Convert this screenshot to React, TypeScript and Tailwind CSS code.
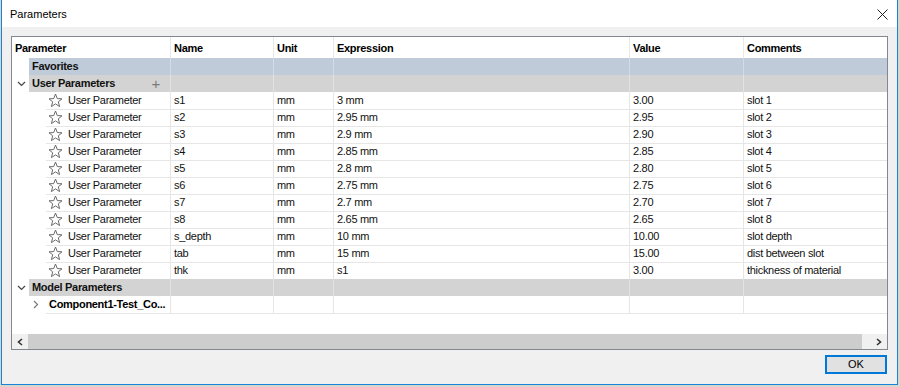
import React from "react";

const rows = [
  ["s1", "3 mm", "3.00", "slot 1"],
  ["s2", "2.95 mm", "2.95", "slot 2"],
  ["s3", "2.9 mm", "2.90", "slot 3"],
  ["s4", "2.85 mm", "2.85", "slot 4"],
  ["s5", "2.8 mm", "2.80", "slot 5"],
  ["s6", "2.75 mm", "2.75", "slot 6"],
  ["s7", "2.7 mm", "2.70", "slot 7"],
  ["s8", "2.65 mm", "2.65", "slot 8"],
  ["s_depth", "10 mm", "10.00", "slot depth"],
  ["tab", "15 mm", "15.00", "dist between slot"],
  ["thk", "s1", "3.00", "thickness of material"],
];

const cols = "grid grid-cols-[159px_103px_60px_296px_114px_1fr]";

function Star() {
  return (
    <svg width="15" height="15" viewBox="0 0 15 15" className="shrink-0">
      <polygon
        points="7.5,1 9.3,5.6 14,5.8 10.3,8.8 11.6,13.6 7.5,10.9 3.4,13.6 4.7,8.8 1,5.8 5.7,5.6"
        fill="none"
        stroke="#6a6a6a"
        strokeWidth="1"
        strokeLinejoin="round"
      />
    </svg>
  );
}

function ChevDown() {
  return (
    <svg width="9" height="6" viewBox="0 0 9 6">
      <polyline points="1,1 4.5,4.5 8,1" fill="none" stroke="#444" strokeWidth="1.2" />
    </svg>
  );
}

function ChevRight() {
  return (
    <svg width="6" height="9" viewBox="0 0 6 9">
      <polyline points="1,1 4.5,4.5 1,8" fill="none" stroke="#777" strokeWidth="1.2" />
    </svg>
  );
}

function GroupRow({
  label,
  bg,
  line,
  chevron,
  plus,
}: {
  label: string;
  bg: string;
  line: string;
  chevron?: boolean;
  plus?: boolean;
}) {
  return (
    <div className={`${cols} h-[17px]`}>
      <div className="flex h-full">
        <div className="w-[17px] flex items-center justify-center bg-white pl-[1px]">
          {chevron && <ChevDown />}
        </div>
        <div className={`flex-1 flex items-center justify-between pl-[3px] pr-[10px] font-bold border-r ${bg} ${line}`}>
          <span>{label}</span>
          {plus && <span className="text-[#7a7a7a] font-normal text-[15px] leading-none">+</span>}
        </div>
      </div>
      <div className={`border-r ${bg} ${line}`} />
      <div className={`border-r ${bg} ${line}`} />
      <div className={`border-r ${bg} ${line}`} />
      <div className={`border-r ${bg} ${line}`} />
      <div className={`${bg}`} />
    </div>
  );
}

export default function App() {
  return (
    <div
      className="w-[900px] h-[387px] bg-[#d9d6cf] overflow-hidden"
      style={{ fontFamily: '"Liberation Sans", Arial, sans-serif' }}
    >
      <div className="ml-[1px] w-[897px] h-[385px] border-x border-b border-[#1883d7] bg-[#f0f0f0] flex flex-col">
        {/* Title bar */}
        <div className="h-[27px] bg-white flex items-center justify-between pl-[8px] pr-[8px] pt-[1px] shrink-0">
          <span className="text-[11px] text-black">Parameters</span>
          <svg width="11" height="11" viewBox="0 0 11 11" className="mr-[1px]">
            <line x1="0.5" y1="0.5" x2="10.5" y2="10.5" stroke="#222" strokeWidth="1" />
            <line x1="10.5" y1="0.5" x2="0.5" y2="10.5" stroke="#222" strokeWidth="1" />
          </svg>
        </div>
        {/* Body */}
        <div className="flex-1 flex flex-col pl-[9px] pr-[9px] pt-[9px]">
          <div className="h-[314px] w-[877px] border border-[#828790] bg-white flex flex-col text-[11px] text-[#111] tracking-[-0.3px]">
            {/* Header */}
            <div className={`${cols} h-[21px] font-bold text-black`}>
              {["Parameter", "Name", "Unit", "Expression", "Value", "Comments"].map((h, i) => (
                <div
                  key={h}
                  className={`flex items-center pl-[3px] pt-[1px] ${i < 5 ? "border-r border-[#e8e8e8]" : ""}`}
                >
                  {h}
                </div>
              ))}
            </div>
            <GroupRow label="Favorites" bg="bg-[#bfcbd8]" line="border-[#d3dbe4]" />
            <GroupRow label="User Parameters" bg="bg-[#d3d3d3]" line="border-[#e2e2e2]" chevron plus />
            {rows.map(([name, expr, val, com]) => (
              <div key={name} className={`${cols} h-[17px]`}>
                <div className="flex h-full">
                  <div className="w-[34px] bg-white" />
                  <div className="flex-1 flex items-center gap-[5px] pl-[2px] border-r border-b border-[#e6e6e6]">
                    <Star />
                    <span>User Parameter</span>
                  </div>
                </div>
                <div className="flex items-center pl-[3px] border-r border-b border-[#e6e6e6]">{name}</div>
                <div className="flex items-center pl-[3px] border-r border-b border-[#e6e6e6]">mm</div>
                <div className="flex items-center pl-[3px] border-r border-b border-[#e6e6e6]">{expr}</div>
                <div className="flex items-center pl-[3px] border-r border-b border-[#e6e6e6]">{val}</div>
                <div className="flex items-center pl-[3px] border-b border-[#e6e6e6]">{com}</div>
              </div>
            ))}
            <GroupRow label="Model Parameters" bg="bg-[#d3d3d3]" line="border-[#e2e2e2]" chevron />
            <div className={`${cols} h-[17px]`}>
              <div className="flex h-full">
                <div className="w-[34px] bg-white flex items-center justify-end pr-[7px]">
                  <ChevRight />
                </div>
                <div className="flex-1 flex items-center pl-[3px] font-bold border-r border-b border-[#e6e6e6] text-black">
                  Component1-Test_Co...
                </div>
              </div>
              <div className="border-r border-b border-[#e6e6e6]" />
              <div className="border-r border-b border-[#e6e6e6]" />
              <div className="border-r border-b border-[#e6e6e6]" />
              <div className="border-r border-b border-[#e6e6e6]" />
              <div className="border-b border-[#e6e6e6]" />
            </div>
            <div className="flex-1" />
            {/* Horizontal scrollbar */}
            <div className="h-[15px] flex bg-[#f0f0f0]">
              <div className="w-[16px] flex items-center justify-center">
                <svg width="6" height="8" viewBox="0 0 6 8">
                  <polyline points="5,1 1.5,4 5,7" fill="none" stroke="#333" strokeWidth="1.6" />
                </svg>
              </div>
              <div className="flex-1 bg-[#cdcdcd]" />
              <div className="w-[8px]" />
              <div className="w-[17px] flex items-center justify-center">
                <svg width="6" height="8" viewBox="0 0 6 8">
                  <polyline points="1,1 4.5,4 1,7" fill="none" stroke="#333" strokeWidth="1.6" />
                </svg>
              </div>
            </div>
          </div>
          {/* Footer */}
          <div className="flex justify-end mt-[5px] pr-[1px]">
            <button className="w-[62px] h-[19px] border-2 border-[#0078d7] bg-[#e1e1e1] text-[11px] text-black flex items-center justify-center">
              OK
            </button>
          </div>
        </div>
      </div>
    </div>
  );
}
